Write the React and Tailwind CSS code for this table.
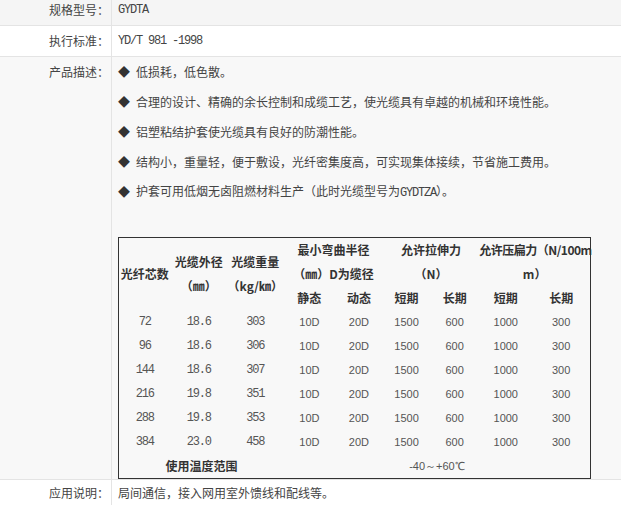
import React from "react";

const CJK = "font-['Noto_Sans_CJK_SC','Noto_Sans',sans-serif]";
const MONO = "font-['Liberation_Mono',monospace] tracking-[-1.2px]";
const SANS = "font-['Liberation_Sans',Arial,sans-serif]";

function Row({ label, bg, className = "", labelClass = "", children }) {
  return (
    <div className={`flex border-b border-[#e4e4e4] ${bg} ${className}`}>
      <div className={`w-[112px] shrink-0 border-r border-[#e4e4e4] pr-[2px] text-right text-[12px] text-[#444] ${CJK} ${labelClass}`}>
        {label}
      </div>
      <div className="min-w-0 flex-1 pl-[6px]">{children}</div>
    </div>
  );
}

const bullets = [
  "低损耗，低色散。",
  "合理的设计、精确的余长控制和成缆工艺，使光缆具有卓越的机械和环境性能。",
  "铝塑粘结护套使光缆具有良好的防潮性能。",
  "结构小，重量轻，便于敷设，光纤密集度高，可实现集体接续，节省施工费用。",
];

const data = [
  ["72", "18.6", "303"],
  ["96", "18.6", "306"],
  ["144", "18.6", "307"],
  ["216", "19.8", "351"],
  ["288", "19.8", "353"],
  ["384", "23.0", "458"],
];

const H = `h-[24px] p-0 text-center align-middle font-bold text-[12px] leading-[24px] text-[#333] ${CJK} whitespace-nowrap`;
const DM = `h-[24px] p-0 text-center align-middle text-[12px] text-[#555] ${MONO}`;
const DS = `h-[24px] p-0 text-center align-middle text-[11px] text-[#555] ${SANS}`;

function Bullet({ children }) {
  return (
    <div className="flex h-[30px] items-center whitespace-nowrap leading-[30px]">
      <span className="inline-block w-[12px] text-center text-[12px] text-[#333]">◆</span>
      <span className="ml-[6px]">{children}</span>
    </div>
  );
}

export default function App() {
  return (
    <div className="w-[621px] h-[505px] overflow-hidden bg-white">
      <Row label="规格型号：" bg="bg-[#f5f5f5]" className="h-[26px]" labelClass="pt-[2px] leading-[16px]">
        <div className={`pt-[2px] leading-[16px] text-[12px] text-[#444] ${MONO}`}>GYDTA</div>
      </Row>
      <Row label="执行标准：" bg="bg-white" className="h-[31px]" labelClass="leading-[30px]">
        <div className={`leading-[30px] text-[12px] text-[#444] ${MONO}`}>YD/T 981 -1998</div>
      </Row>
      <Row label="产品描述：" bg="bg-[#f8f8f8]" className="h-[423px]" labelClass="leading-[30px]">
        <div className={`text-[12px] text-[#444] ${CJK}`}>
          {bullets.map((b) => (
            <Bullet key={b}>{b}</Bullet>
          ))}
          <Bullet>
            护套可用低烟无卤阻燃材料生产（此时光缆型号为
            <span className={`text-[12px] ${MONO}`}>GYDTZA</span>）。
          </Bullet>
          <div className="h-[30px]" />
          <table className="w-[473px] table-fixed border-collapse border border-[#333]">
            <colgroup>
              <col className="w-[52px]" />
              <col className="w-[56px]" />
              <col className="w-[57px]" />
              <col className="w-[51px]" />
              <col className="w-[48px]" />
              <col className="w-[47px]" />
              <col className="w-[49px]" />
              <col className="w-[53px]" />
              <col className="w-[58px]" />
            </colgroup>
            <tbody>
              <tr>
                <td rowSpan={3} className={H}>光纤芯数</td>
                <td rowSpan={3} className={H}>
                  <div>光缆外径</div>
                  <div>（㎜）</div>
                </td>
                <td rowSpan={3} className={H}>
                  <div>光缆重量</div>
                  <div>（kg/㎞）</div>
                </td>
                <td colSpan={2} className={H}>最小弯曲半径</td>
                <td colSpan={2} className={H}>允许拉伸力</td>
                <td colSpan={2} className={`${H} text-left tracking-[-0.5px]`}>允许压扁力（N/100m</td>
              </tr>
              <tr>
                <td colSpan={2} className={H}>（㎜）D为缆径</td>
                <td colSpan={2} className={H}>（N）</td>
                <td colSpan={2} className={H}>m）</td>
              </tr>
              <tr>
                <td className={H}>静态</td>
                <td className={H}>动态</td>
                <td className={H}>短期</td>
                <td className={H}>长期</td>
                <td className={H}>短期</td>
                <td className={H}>长期</td>
              </tr>
              {data.map((r) => (
                <tr key={r[0]}>
                  <td className={DM}>{r[0]}</td>
                  <td className={DM}>{r[1]}</td>
                  <td className={DM}>{r[2]}</td>
                  <td className={DS}>10D</td>
                  <td className={DS}>20D</td>
                  <td className={DS}>1500</td>
                  <td className={DS}>600</td>
                  <td className={DS}>1000</td>
                  <td className={DS}>300</td>
                </tr>
              ))}
              <tr>
                <td colSpan={3} className={H}>使用温度范围</td>
                <td colSpan={6} className={DS}>-40～+60℃</td>
              </tr>
            </tbody>
          </table>
        </div>
      </Row>
      <Row label="应用说明：" bg="bg-white" className="h-[30px]" labelClass="pt-[5px] leading-[16px]">
        <div className={`pt-[5px] leading-[16px] text-[12px] text-[#444] ${CJK}`}>
          局间通信，接入网用室外馈线和配线等。
        </div>
      </Row>
    </div>
  );
}
